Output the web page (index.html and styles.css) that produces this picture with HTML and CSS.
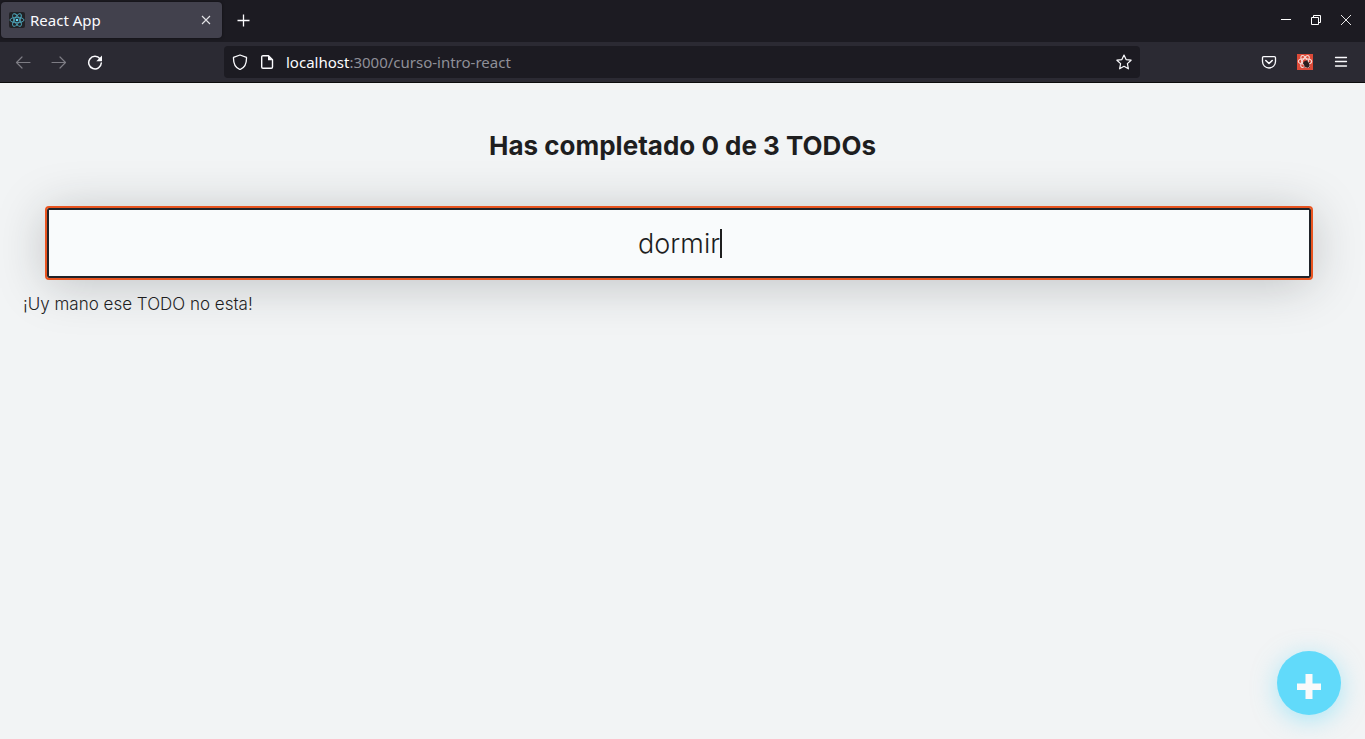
FILE: index.html
```html
<!DOCTYPE html>
<html lang="es">
<head>
<meta charset="utf-8">
<meta name="viewport" content="width=device-width, initial-scale=1">
<title>React App</title>
<link rel="stylesheet" href="styles.css">
</head>
<body>
<div class="browser">
  <header class="chrome">
    <div class="tabbar">
      <div class="tab">
        <svg class="icon" viewBox="0 0 16 16"><rect width="16" height="16" rx="2" fill="#222226"/><g fill="none" stroke="#4fa9be" stroke-width=".9"><ellipse cx="8" cy="8" rx="7" ry="2.7"/><ellipse cx="8" cy="8" rx="7" ry="2.7" transform="rotate(60 8 8)"/><ellipse cx="8" cy="8" rx="7" ry="2.7" transform="rotate(120 8 8)"/></g><circle cx="8" cy="8" r="1.3" fill="#61dafb"/></svg>
        <span class="tab-title">React App</span>
        <button class="icon-button" type="button" aria-label="Cerrar pestaña"><svg class="icon" viewBox="0 0 16 16"><path d="M4 4l8 8M12 4l-8 8" stroke="#e4e4e8" stroke-width="1.1" fill="none"/></svg></button>
      </div>
      <button class="icon-button" type="button" aria-label="Nueva pestaña"><svg class="icon" viewBox="0 0 16 16"><path d="M7.500 2.500v12M1.500 8.500h12" stroke="#fbfbfe" stroke-width="1.3" fill="none"/></svg></button>
      <div class="window-controls">
        <button class="icon-button" type="button" aria-label="Minimizar"><svg class="icon" viewBox="0 0 16 16"><path d="M3 7.500h10" stroke="#fff" fill="none"/></svg></button>
        <button class="icon-button" type="button" aria-label="Restaurar"><svg class="icon" viewBox="0 0 16 16"><path d="M3.500 5.500h7v7h-7zM5.500 5V3.500h7v7H11" stroke="#fff" fill="none"/></svg></button>
        <button class="icon-button" type="button" aria-label="Cerrar"><svg class="icon" viewBox="0 0 16 16"><path d="M3 3l10 10M13 3L3 13" stroke="#fff" stroke-width=".9" fill="none"/></svg></button>
      </div>
    </div>
    <nav class="toolbar" aria-label="Navegación">
      <div class="history">
        <button class="icon-button dim" type="button" aria-label="Atrás" disabled><svg class="icon" viewBox="0 0 16 16"><path d="M15 8.500H1.500M7 3L1.500 8.500 7 14" stroke="currentColor" stroke-width="1.2" fill="none" stroke-linecap="round" stroke-linejoin="round"/></svg></button>
        <button class="icon-button dim" type="button" aria-label="Adelante" disabled><svg class="icon" viewBox="0 0 16 16"><path d="M1 8.500h13.500M9 3l5.500 5.500L9 14" stroke="currentColor" stroke-width="1.2" fill="none" stroke-linecap="round" stroke-linejoin="round"/></svg></button>
        <button class="icon-button" type="button" aria-label="Recargar"><svg class="icon" viewBox="0 0 16 16"><path d="M13 4.800A6.300 6.300 0 1 0 14.300 9" stroke="#fbfbfe" stroke-width="1.5" fill="none" stroke-linecap="round"/><path d="M15 1.500v5.700H9.300z" fill="#fbfbfe"/></svg></button>
      </div>
      <div class="urlbar">
        <svg class="icon" viewBox="0 0 16 16"><path d="M8 1L1.500 3.400c-.2 6 1.700 10.500 6.500 12.100 4.800-1.600 6.700-6.100 6.500-12.100z" stroke="#fbfbfe" stroke-width="1.3" fill="none" stroke-linejoin="round"/></svg>
        <svg class="icon" viewBox="0 0 16 16"><path d="M4 1.700h5.500l4 4V13a1.300 1.300 0 0 1-1.300 1.300H4A1.300 1.300 0 0 1 2.700 13V3A1.300 1.300 0 0 1 4 1.700z" stroke="#fbfbfe" stroke-width="1.4" fill="none" stroke-linejoin="round"/><path d="M9 1.500v4.700h4.700z" fill="#fbfbfe"/></svg>
        <div class="address"><span class="host">localhost</span>:3000/curso-intro-react</div>
        <button class="icon-button" type="button" aria-label="Agregar a marcadores"><svg class="icon" viewBox="0 0 16 16"><path d="M8 1l2.100 4.600 5 .6-3.700 3.400 1 5.200L8 12.300l-4.400 2.500 1-5.200L.9 6.200l5-.6z" stroke="#fbfbfe" stroke-width="1.200" fill="none" stroke-linejoin="round"/></svg></button>
      </div>
      <div class="actions">
        <button class="icon-button" type="button" aria-label="Pocket"><svg class="icon" viewBox="0 0 16 16"><path d="M2.700 2.600h10.600c.8 0 1.200.5 1.200 1.200v3.700a6.500 6.500 0 0 1-13 0V3.800c0-.7.400-1.200 1.200-1.200z" stroke="#fbfbfe" stroke-width="1.300" fill="none"/><path d="M4.800 6.500L8 9.500l3.200-3" stroke="#fbfbfe" stroke-width="1.600" fill="none" stroke-linecap="round" stroke-linejoin="round"/></svg></button>
        <button class="icon-button" type="button" aria-label="React Developer Tools"><svg class="icon" viewBox="0 0 16 16"><rect width="16" height="16" fill="#dc4a38"/><g fill="none" stroke="#f6d9d5" stroke-width="1.100"><ellipse cx="8" cy="7.500" rx="6.700" ry="2.700"/><ellipse cx="8" cy="7.500" rx="6.700" ry="2.700" transform="rotate(60 8 7.500)"/><ellipse cx="8" cy="7.500" rx="6.700" ry="2.700" transform="rotate(120 8 7.500)"/></g><ellipse cx="9.500" cy="10.200" rx="2.600" ry="3.600" transform="rotate(-35 9.500 10.200)" fill="#2b1e1e"/><path d="M6 9l2 .8M7 13.500l1.500-1.500M10 6l.2 2M12.800 8.500l-1.500.7M12.500 13.500l-1-1" stroke="#2b1e1e"/></svg></button>
        <button class="icon-button" type="button" aria-label="Menú"><svg class="icon" viewBox="0 0 16 16"><path d="M2.500 3.500h11M2.500 7.500h11M2.500 12h11" stroke="#fbfbfe" stroke-width="1.300" stroke-linecap="round" fill="none"/></svg></button>
      </div>
    </nav>
  </header>
  <main class="page">
    <h2 class="counter">Has completado 0 de 3 TODOs</h2>
    <div class="search">
      <input class="search-input" type="text" value="dormir" aria-label="Buscar TODO">
      <span class="caret"></span>
    </div>
    <p class="empty">¡Uy mano ese TODO no esta!</p>
    <button class="create" type="button" aria-label="Crear TODO"><svg class="plus" viewBox="0 0 24 26"><path d="M8.500 0h7v9.500H24V16h-8.500v9h-7v-9H0V9.500h8.500z" fill="#fafafa"/></svg></button>
  </main>
</div>
</body>
</html>
```
FILE: styles.css
```css
* { box-sizing: border-box; }
body { margin: 0; background: #f2f4f5; color: #1e1e1f; font-family: Inter, sans-serif; }
.browser { display: flex; flex-direction: column; min-height: 100vh; }
.chrome { color: #fbfbfe; font: 15px/20px "Noto Sans", sans-serif; border-bottom: 1px solid #0c0c0d; }
.icon { display: block; flex: none; width: 16px; height: 16px; }
.icon-button { flex: none; padding: 0; border: 0; background: none; color: #fbfbfe; }
.dim { color: #7d7c84; }
.tabbar { display: flex; align-items: center; gap: 14px; height: 42px; padding: 0 11px 2px 1px; background: #1c1b22; }
.tab { display: flex; align-items: center; gap: 5px; width: 221px; height: 36px; padding: 0 8px; border-radius: 4px; background: #42414d; box-shadow: 0 0 3px rgba(0, 0, 0, .5); }
.tab-title { flex: 1; }
.window-controls { display: flex; gap: 14px; margin-left: auto; }
.toolbar { display: flex; align-items: center; height: 40px; padding: 0 16px 0 15px; background: #2b2a33; }
.history { display: flex; gap: 20px; width: 209px; }
.urlbar { display: flex; flex: 1; align-items: center; gap: 11px; height: 32px; padding: 0 8px; border-radius: 4px; background: #1c1b22; }
.address { flex: 1; color: #8f8f98; }
.host { color: #fbfbfe; }
.actions { display: flex; justify-content: flex-end; gap: 20px; width: 209px; }
.page { flex: 1; }
.counter { margin: 0; padding: 48px 0; font-size: 26px; font-weight: 700; line-height: 29px; text-align: center; }
.search { position: relative; margin: 0 54px 0 47px; }
.search-input { display: block; width: 100%; height: 70px; padding: 0 24px; border: 2px solid #202329; border-radius: 2px; outline: 2px solid #e95420; background: #f9fbfc; box-shadow: 0 5px 50px rgba(32, 35, 41, .25); color: #1e1e1f; font: 300 27px Inter, sans-serif; text-align: center; }
.caret { position: absolute; top: 21px; left: calc(50% + 41px); width: 2px; height: 29px; background: #1e1e1f; }
.empty { position: relative; margin: 16px 23px; font-size: 17px; font-weight: 300; line-height: 20px; }
.create { position: fixed; right: 24px; bottom: 24px; display: grid; place-items: center; width: 64px; height: 64px; padding: 7px 0 0; border: 0; border-radius: 50%; background: #61dafa; box-shadow: 0 5px 25px rgba(97, 218, 250, .5); }
.plus { width: 24px; height: 26px; }
```
